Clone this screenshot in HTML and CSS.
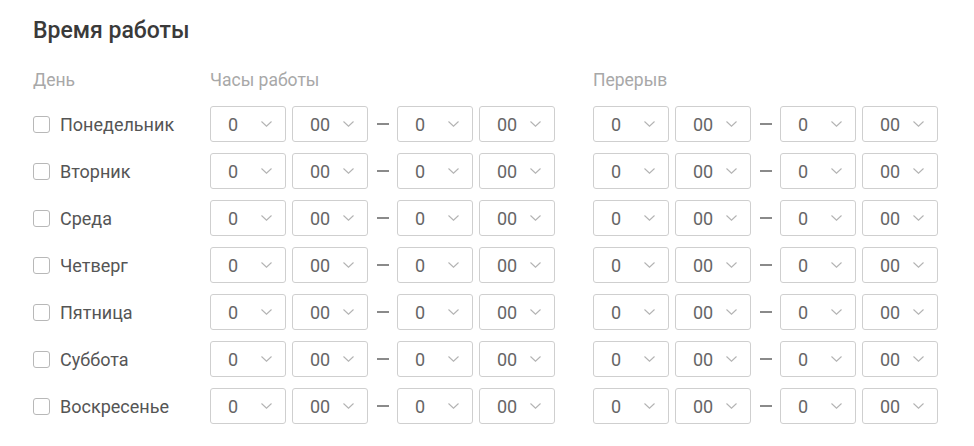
FILE: index.html
```html
<!DOCTYPE html>
<html lang="ru">
<head>
    <meta charset="UTF-8">
    <meta name="viewport" content="width=device-width, initial-scale=1.0">
    <title>Время работы</title>
    <link rel="stylesheet" href="styles.css">
</head>
<body>
    <div class="schedule">
        <h2>Время работы</h2>
        <div class="row head">
            <div class="day">День</div>
            <div class="group">Часы работы</div>
            <div class="group break">Перерыв</div>
        </div>
        <div id="rows"></div>
    </div>

    <template id="select-tpl">
        <div class="select">
            <span class="value"></span>
            <svg width="11" height="6" viewBox="0 0 11 6"><path d="M0.5 0.5 L5.5 5.2 L10.5 0.5" fill="none" stroke="#b3b3b3" stroke-width="1.1"/></svg>
        </div>
    </template>

    <script>
        const days = ['Понедельник', 'Вторник', 'Среда', 'Четверг', 'Пятница', 'Суббота', 'Воскресенье'];
        const tpl = document.getElementById('select-tpl');

        function makeSelect(value) {
            const el = tpl.content.firstElementChild.cloneNode(true);
            el.querySelector('.value').innerText = value;
            return el;
        }

        function makeGroup(extra) {
            const group = document.createElement('div');
            group.className = 'group' + (extra ? ' ' + extra : '');
            group.appendChild(makeSelect('0'));
            group.appendChild(makeSelect('00'));
            const dash = document.createElement('span');
            dash.className = 'dash';
            group.appendChild(dash);
            group.appendChild(makeSelect('0'));
            group.appendChild(makeSelect('00'));
            return group;
        }

        const rows = document.getElementById('rows');
        days.forEach(day => {
            const row = document.createElement('div');
            row.className = 'row';
            row.innerHTML = `<label class="day"><span class="check"></span>${day}</label>`;
            row.appendChild(makeGroup());
            row.appendChild(makeGroup('break'));
            rows.appendChild(row);
        });
    </script>
</body>
</html>
```

FILE: styles.css
```css
body {
    margin: 0;
    font-family: Roboto, "Liberation Sans", sans-serif;
    background: #fff;
    color: #555;
}
.schedule {
    padding: 15px 0 0 33px;
}
h2 {
    margin: 0;
    font-size: 23px;
    font-weight: 500;
    color: #3a3a3a;
    line-height: 32px;
}
.row {
    display: flex;
    align-items: center;
    height: 36px;
    margin-bottom: 11px;
}
.row.head {
    margin-top: 17px;
    height: 32px;
    margin-bottom: 10px;
}
.day {
    width: 177px;
    display: flex;
    align-items: center;
    font-size: 18px;
    color: #555;
}
.head .day,
.head .group {
    font-size: 17.5px;
    color: #a8a8a8;
}
.check {
    width: 15px;
    height: 15px;
    border: 1px solid #b8b8b8;
    border-radius: 3px;
    margin-right: 10px;
}
.group {
    width: 345px;
    display: flex;
    align-items: center;
    gap: 6px;
}
.group.break {
    margin-left: 38px;
}
.select {
    box-sizing: border-box;
    width: 76px;
    height: 36px;
    border: 1px solid #cfcfcf;
    border-radius: 3px;
    display: flex;
    align-items: center;
    justify-content: space-between;
    padding: 0 13px 0 17px;
    font-size: 18px;
    color: #666;
}
.select svg {
    display: block;
}
.dash {
    width: 12px;
    height: 2px;
    background: #8a8a8a;
    margin: 0 2.5px;
}
```
